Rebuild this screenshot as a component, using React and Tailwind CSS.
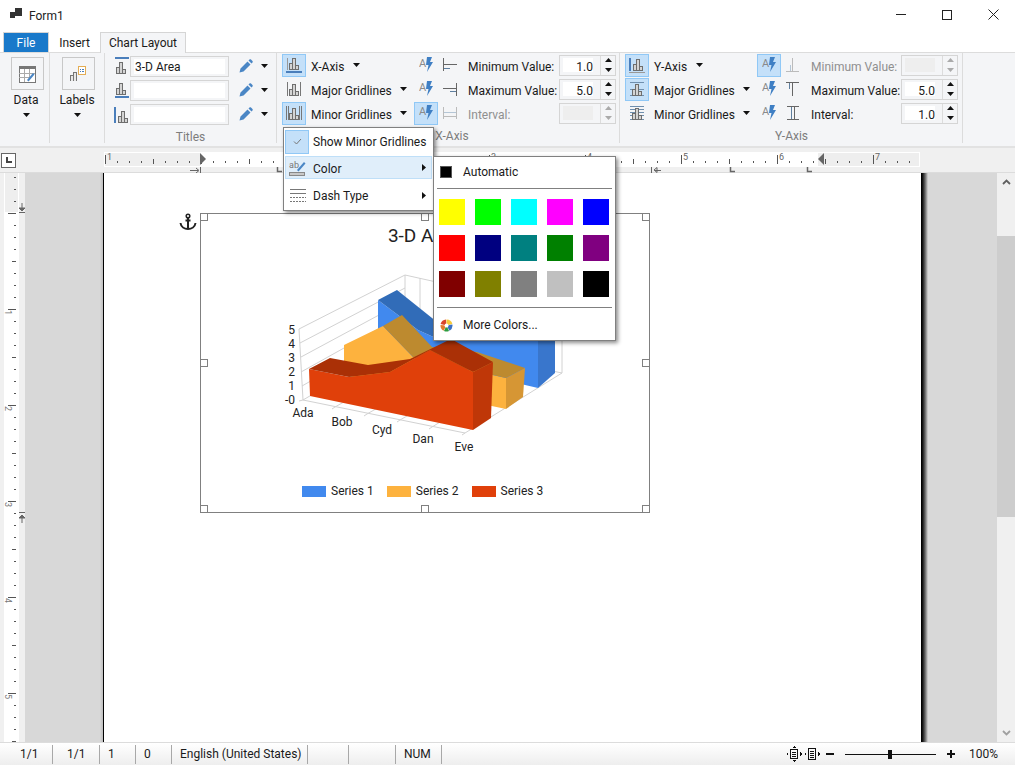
const Caret = ({ className = "" }) => (
  <svg width="7" height="4" viewBox="0 0 7 4" className={className}>
    <path d="M0 0h7L3.500 4z" fill="#111" />
  </svg>
);

const Bars = ({ x = 0, y = 0 }) => (
  <g transform={`translate(${x} ${y})`} fill="#d4d4d4" stroke="#6e6e6e">
    <rect x="4.500" y="8.500" width="3" height="6" />
    <rect x="7.500" y="3.500" width="3" height="11" />
    <rect x="10.500" y="10.500" width="3" height="4" />
  </g>
);

// small chart glyphs used on the ribbon, all on an 18x18 box
const ChartIcon = ({ kind }) => (
  <svg width="18" height="18" viewBox="0 0 18 18" shapeRendering="crispEdges">
    {kind === "top" && (<><path d="M3 1h14" stroke="#4a7ebb" strokeWidth="2" /><Bars y={2} /></>)}
    {kind === "base" && (<><Bars y={-1} /><path d="M3 16h14" stroke="#4a7ebb" strokeWidth="2" /></>)}
    {kind === "side" && (<><path d="M3 2v16" stroke="#4a7ebb" strokeWidth="2" /><Bars x={2} y={3} /></>)}
    {kind === "xaxis" && (<><path d="M2.500 2v12" stroke="#999" /><Bars y={-1} /><path d="M1 16h16" stroke="#4a7ebb" strokeWidth="2" /></>)}
    {kind === "major" && (<><path d="M2.500 2v14M15.500 2v14" stroke="#777" /><Bars x={0} y={1} /></>)}
    {kind === "minor" && (<><path d="M1.500 2v14M3.500 2v14M14.500 2v14M16.500 2v14" stroke="#777" /><Bars x={0} y={1} /></>)}
    {kind === "yaxis" && (<><path d="M2 2v13" stroke="#4a7ebb" strokeWidth="2" /><Bars x={1} y={0} /><path d="M1 16.500h16" stroke="#999" strokeWidth="1.500" /></>)}
    {kind === "ymajor" && (<><path d="M2 2.500h14M2 9.500h14M2 15.500h14" stroke="#6f8fae" /><Bars y={1} /></>)}
    {kind === "yminor" && (<><path d="M2 2.500h14M2 5.500h14M2 8.500h14M2 11.500h14M2 15.500h14" stroke="#6f8fae" /><Bars y={1} /></>)}
  </svg>
);

const Pencil = () => (
  <svg width="14" height="14" viewBox="0 0 14 14">
    <path d="M0.500 13.500l1-4 7-7 3 3-7 7zM9.500 1.500l1-1c.5-.4 1-.4 1.500 0l1.500 1.500c.4.500.4 1 0 1.500l-1 1z" fill="#4a86c5" />
  </svg>
);

const Bolt = () => (
  <svg width="14" height="18" viewBox="0 0 14 18">
    <text x="0" y="11" fontSize="11" fill="#8a8a8a">A</text>
    <path d="M8 1h5l-2 5h3l-6 10 1.500-7H7z" fill="#3f7fc4" />
  </svg>
);

const ScaleIcon = ({ kind, muted }) => {
  const c = muted ? "#b5c6d6" : "#5f7f9f";
  const d = muted ? "#bbb" : "#666";
  return (
    <svg width="18" height="18" viewBox="0 0 18 18" shapeRendering="crispEdges">
      {kind === "xmin" && (<><path d="M2.500 2v13M2.500 8.500h13" stroke={d} fill="none" /><path d="M3 12.500h6" stroke={c} /></>)}
      {kind === "xmax" && (<><path d="M15.500 3v13M2 8.500h13" stroke={d} fill="none" /><path d="M9 11.500h6" stroke={c} /></>)}
      {kind === "xint" && (<><path d="M2.500 3v12M15.500 3v12M2.500 12.500h13" stroke={d} fill="none" /><path d="M3 8.500h12" stroke={c} /></>)}
      {kind === "ymin" && (<><path d="M2 15.500h13M8.500 2v13" stroke={d} fill="none" /><path d="M6.500 9v6" stroke={c} /></>)}
      {kind === "ymax" && (<><path d="M2 2.500h13M8.500 3v13" stroke={d} fill="none" /><path d="M5.500 3v6" stroke={c} /></>)}
      {kind === "yint" && (<><path d="M3 2.500h12M3 15.500h12M10.500 3v12" stroke={d} fill="none" /><path d="M7.500 3v12" stroke={c} /></>)}
    </svg>
  );
};

const ToolBtn = ({ active, children, className = "w-[24px]" }) => (
  <div className={`${className} h-[23px] flex items-center justify-center border ${active ? "bg-[#c4e0f9] border-[#90c8f6]" : "border-transparent"}`}>
    {children}
  </div>
);

const TitleRow = ({ icon, value }) => (
  <div className="flex items-center h-[24px]">
    <div className="w-[18px] ml-[7px] flex justify-center"><ChartIcon kind={icon} /></div>
    <div className="w-[99px] h-[21px] border border-[#d5d5d5] flex items-center px-[3px]">
      <div className="w-full h-[15px] bg-white flex items-center pl-[1px] pt-[2px] leading-none">{value}</div>
    </div>
    <div className="ml-[10px]"><Pencil /></div>
    <Caret className="ml-[8px]" />
  </div>
);

const Spinner = ({ value, disabled, className = "ml-auto" }) => (
  <div className={`${className} w-[57px] h-[21px] border border-[#d5d5d5] flex items-center`}>
    <div className={`w-[30px] h-[14px] ml-[3px] pt-[3px] text-right leading-none flex items-center justify-end ${disabled ? "bg-[#eeeeee]" : "bg-white"}`}>{value}</div>
    <div className="ml-[7px] h-full w-[15px] border-l border-[#dcdcdc] flex flex-col items-center justify-center gap-[6px]">
      <svg width="7" height="4" viewBox="0 0 7 4"><path d="M0 4h7L3.500 0z" fill={disabled ? "#aaa" : "#111"} /></svg>
      <svg width="7" height="4" viewBox="0 0 7 4"><path d="M0 0h7L3.500 4z" fill={disabled ? "#aaa" : "#111"} /></svg>
    </div>
  </div>
);

const GroupLabel = ({ children }) => (
  <div className="text-center text-[#7d7d7d] leading-none">{children}</div>
);

const AxisRow = ({ icon, name, caretGap, active, boltActive, scale, muted, label, value, disabled, labelMuted }) => (
  <div className="flex items-center h-[24px]">
    <ToolBtn active={active}><ChartIcon kind={icon} /></ToolBtn>
    <div className="ml-[5px] w-[103px] flex items-center">
      <span className="pt-[4px]">{name}</span>
      <Caret className={caretGap} />
    </div>
    <ToolBtn active={boltActive}><Bolt /></ToolBtn>
    <div className="ml-[3px] w-[18px]"><ScaleIcon kind={scale} muted={muted} /></div>
    <span className={`ml-[9px] pt-[4px] ${labelMuted ? "text-[#8f8f8f]" : ""}`}>{label}</span>
    <Spinner value={value} disabled={disabled} />
  </div>
);

const AreaChart = () => (
  <svg width="448" height="260" viewBox="201 214 448 260" className="block">
    <text x="424" y="242" textAnchor="middle" fontSize="19" fill="#222">3-D Area</text>
    {/* walls and floor */}
    <g stroke="#d2d2d2" fill="none">
      <path d="M299 329L405 275L562 310V373L465 433L303 400L299 329M405 275V340L562 373M405 340L303 400" />
      <path d="M300 343L405 288M301 357L405 301M301 372L405 314M302 386L405 327" />
      <path d="M420 278V344M436 281V347M452 285V350M551 307V372M540 304V371" />
      <path d="M335 407L432 352M367 414L465 358M400 420L497 364M432 427L530 367" />
      <path d="M303 400l-4 1M335 407l-3 2M367 414l-3 2M400 420l-3 2M432 427l-3 2M465 433l-3 2" />
    </g>
    {/* blue series */}
    <path d="M378 300L418 330L440 340L538 340V388L378 350z" fill="#4189ee" />
    <path d="M378 300L397 290L437 322L560 322L538 340L440 340L418 330z" fill="#316cb8" />
    <path d="M538 340L555 330V373L538 388z" fill="#3976cc" />
    {/* orange series */}
    <path d="M344 345L383 326L413 357L506 378V409L344 375z" fill="#fdb23e" />
    <path d="M383 326L402 315L432 347L477 352L525 368L506 378L413 357z" fill="#bd8a2f" />
    <path d="M506 378L525 368L523 397L506 409z" fill="#d69634" />
    {/* red series */}
    <path d="M309 369L349 377L390 372L430 350L473 372V430L310 396z" fill="#e0400a" />
    <path d="M309 369L330 358L368 365L410 359L451 339L493 362L473 372L430 350L390 372L349 377z" fill="#aa3006" />
    <path d="M473 372L493 362L491 418L473 430z" fill="#bf3708" />
    <g fontSize="12" fill="#222" textAnchor="end">
      <text x="295" y="334">5</text>
      <text x="295" y="348">4</text>
      <text x="295" y="362">3</text>
      <text x="295" y="376">2</text>
      <text x="295" y="390">1</text>
      <text x="295" y="404">-0</text>
    </g>
    <g fontSize="12" fill="#222" textAnchor="middle">
      <text x="303" y="417">Ada</text>
      <text x="342" y="426">Bob</text>
      <text x="382" y="434">Cyd</text>
      <text x="423" y="443">Dan</text>
      <text x="464" y="451">Eve</text>
    </g>
  </svg>
);

const LegendItem = ({ swatch, name }) => (
  <div className="flex items-center gap-[5px]">
    <div className={`w-[24px] h-[11px] ${swatch}`} />
    <span className="text-[#222]">{name}</span>
  </div>
);

const Handle = ({ className }) => (
  <div className={`absolute w-[8px] h-[8px] bg-white border border-[#808080] ${className}`} />
);

const SWATCHES = [
  "bg-[#ffff00]", "bg-[#00ff00]", "bg-[#00ffff]", "bg-[#ff00ff]", "bg-[#0000ff]",
  "bg-[#ff0000]", "bg-[#000080]", "bg-[#008080]", "bg-[#008000]", "bg-[#800080]",
  "bg-[#800000]", "bg-[#808000]", "bg-[#808080]", "bg-[#c0c0c0]", "bg-[#000000]",
];

const hTicks = [];
for (let x = 105; x < 920; x += 12) hTicks.push(x);
const vTicks = [];
for (let y = 4; y < 569; y += 12) vTicks.push(y);

const HRuler = () => (
  <svg width="999" height="25" viewBox="16 0 999 25" className="block">
    <rect x="104" y="4" width="816" height="15" fill="#fff" />
    <rect x="105" y="5" width="95" height="13" fill="#eeeeee" />
    <rect x="818" y="5" width="101" height="13" fill="#eeeeee" />
    <g stroke="#555" shapeRendering="crispEdges">
      {hTicks.map((x) => {
        const k = (x - 105) / 12;
        const y1 = k % 8 === 0 ? 7 : k % 4 === 0 ? 11 : 13;
        const y2 = k % 8 === 0 ? 16 : k % 4 === 0 ? 16 : 15;
        return <line key={x} x1={x + 0.5} x2={x + 0.5} y1={y1} y2={y2} />;
      })}
    </g>
    <g fontSize="9" fill="#666">
      <text x="107" y="12">1</text>
      <text x="299" y="12">1</text>
      <text x="395" y="12">2</text>
      <text x="491" y="12">3</text>
      <text x="587" y="12">4</text>
      <text x="683" y="12">5</text>
      <text x="779" y="12">6</text>
      <text x="875" y="12">7</text>
    </g>
    <path d="M200 5l6 6-6 6z" fill="#666" />
    <path d="M824 5l-6 6 6 6z" fill="#666" />
    <path d="M190 22.500h8M196 20l3 2.500-3 2.500M200.500 19v6" stroke="#666" fill="none" />
    <path d="M651.500 19v6M654 22l3-2.500v5zM655 22.500h6" stroke="#666" fill="none" />
    <path d="M277.500 19v4.500H282M730.500 19v4.500H735M807.500 19v4.500H812" stroke="#666" strokeWidth="1.500" fill="none" />
  </svg>
);

const VRuler = () => (
  <svg width="25" height="569" viewBox="0 0 25 569" className="block shrink-0">
    <rect x="4" y="0" width="15" height="569" fill="#fff" />
    <rect x="5" y="0" width="13" height="39" fill="#eeeeee" />
    <g stroke="#555" shapeRendering="crispEdges">
      {vTicks.map((y) => {
        const k = (y - 40) / 12;
        const big = k % 8 === 0;
        const mid = k % 4 === 0;
        return <line key={y} x1={big ? 8 : mid ? 12 : 14} x2="16" y1={y + 0.5} y2={y + 0.5} />;
      })}
    </g>
    <g fontSize="9" fill="#777">
      <text transform="translate(5 137) rotate(90)">1</text>
      <text transform="translate(5 233) rotate(90)">2</text>
      <text transform="translate(5 329) rotate(90)">3</text>
      <text transform="translate(5 425) rotate(90)">4</text>
      <text transform="translate(5 521) rotate(90)">5</text>
    </g>
    <path d="M22 30v8M19 35h6l-3 3zM19 39.500h6" stroke="#666" fill="#666" />
    <path d="M22 350v-8M19 345h6l-3-3zM19 339.500h6" stroke="#666" fill="#666" />
  </svg>
);

const StatusCell = ({ className, children }) => (
  <div className={`h-[19px] flex items-center border-r border-[#a8a8a8] ${className}`}>{children}</div>
);

export default function App() {
  return (
    <div className="relative w-[1015px] h-[765px] overflow-hidden bg-white flex flex-col font-[Roboto,sans-serif] text-[12px] text-[#1a1a1a]">
      {/* title bar */}
      <div className="h-[32px] flex items-center shrink-0">
        <svg width="13" height="12" viewBox="0 0 13 12" className="ml-[10px] mt-[-4px]" shapeRendering="crispEdges">
          <path d="M0 4h5v6H0zM5 0h7v8H5z" fill="#333" />
        </svg>
        <span className="ml-[6px] mt-[-1px] text-[#222]">Form1</span>
        <div className="ml-auto flex items-center mt-[-3px]">
          <div className="w-[46px] flex justify-center"><div className="w-[10px] h-px bg-[#222]" /></div>
          <div className="w-[46px] flex justify-center"><div className="w-[10px] h-[10px] border border-[#222]" /></div>
          <div className="w-[46px] mr-[-1px] flex justify-center">
            <svg width="11" height="11" viewBox="0 0 11 11"><path d="M0.500 0.500l10 10M10.500 0.500l-10 10" stroke="#222" /></svg>
          </div>
        </div>
      </div>
      {/* tabs */}
      <div className="h-[21px] shrink-0 flex items-end border-b border-[#dcdcdc] pl-[3px]">
        <div className="w-[46px] h-[20px] bg-[#1979ca] text-white flex items-center justify-center border border-[#d5d5d5] border-b-0">File</div>
        <div className="w-[51px] h-[20px] flex items-center justify-center pt-[1px]">Insert</div>
        <div className="w-[86px] h-[21px] mb-[-1px] bg-[#f4f5f7] border border-[#d5d5d5] border-b-0 flex items-center justify-center">Chart Layout</div>
      </div>
      {/* ribbon */}
      <div className="h-[95px] shrink-0 bg-[#f4f5f7] border-b-2 border-[#e2e2e2] flex">
        <div className="w-[50px] h-[90px] border-r border-[#dcdcdc] flex flex-col items-center pt-[4px]">
          <div className="w-[33px] h-[33px] border border-[#c8c8c8] flex items-center justify-center ml-[5px]">
            <svg width="18" height="18" viewBox="0 0 18 18" shapeRendering="crispEdges">
              <rect x="1" y="1" width="16" height="16" fill="#fff" stroke="#777" />
              <rect x="1" y="1" width="16" height="3" fill="#777" />
              <path d="M1 8.500h16M1 12.500h10M6.500 4v13M11.500 4v9" stroke="#aaa" />
              <path d="M9 15l6-7 1.500 1.500-6 7z" fill="#4a86c5" shapeRendering="auto" />
            </svg>
          </div>
          <span className="mt-[2px] ml-[3px] leading-[16px]">Data</span>
          <Caret className="mt-[5px] ml-[3px]" />
        </div>
        <div className="w-[55px] h-[90px] border-r border-[#dcdcdc] flex flex-col items-center pt-[4px]">
          <div className="w-[33px] h-[33px] border border-[#c8c8c8] flex items-center justify-center ml-[2px]">
            <svg width="18" height="18" viewBox="0 0 18 18" shapeRendering="crispEdges">
              <path d="M1.500 16V10h3v6M4.500 16V7h3v9" fill="#e8e8e8" stroke="#777" />
              <rect x="9.500" y="1.500" width="7" height="8" fill="#fff" stroke="#e4ad55" />
              <path d="M11 4h1M11 6h1M13 4h2M13 6h2" stroke="#4a7ebb" />
            </svg>
          </div>
          <span className="mt-[2px] leading-[16px]">Labels</span>
          <Caret className="mt-[5px]" />
        </div>
        <div className="w-[172px] h-[90px] border-r border-[#dcdcdc] flex flex-col pt-[1px]">
          <TitleRow icon="top" value="3-D Area" />
          <TitleRow icon="base" value="" />
          <TitleRow icon="side" value="" />
          <div className="mt-[5px]"><GroupLabel>Titles</GroupLabel></div>
        </div>
        <div className="w-[343px] h-[90px] border-r border-[#dcdcdc] flex flex-col pl-[5px] pr-[3px]">
          <AxisRow icon="xaxis" name="X-Axis" caretGap="ml-[9px]" active scale="xmin" label="Minimum Value:" value="1.0" />
          <AxisRow icon="major" name="Major Gridlines" caretGap="ml-[8px]" scale="xmax" label="Maximum Value:" value="5.0" />
          <AxisRow icon="minor" name="Minor Gridlines" caretGap="ml-[8px]" active boltActive scale="xint" muted label="Interval:" disabled labelMuted />
          <div className="mt-[5px] pl-[6px]"><GroupLabel>X-Axis</GroupLabel></div>
        </div>
        <div className="w-[343px] h-[90px] border-r border-[#dcdcdc] flex flex-col pl-[5px] pr-[4px]">
          <AxisRow icon="yaxis" name="Y-Axis" caretGap="ml-[9px]" active boltActive scale="ymin" muted label="Minimum Value:" disabled labelMuted />
          <AxisRow icon="ymajor" name="Major Gridlines" caretGap="ml-[8px]" active scale="ymax" label="Maximum Value:" value="5.0" />
          <AxisRow icon="yminor" name="Minor Gridlines" caretGap="ml-[8px]" scale="yint" label="Interval:" value="1.0" />
          <div className="mt-[5px]"><GroupLabel>Y-Axis</GroupLabel></div>
        </div>
      </div>
      {/* ruler */}
      <div className="h-[25px] shrink-0 bg-[#f0f0f0] flex items-center border-b border-[#dcdcdc]">
        <div className="w-[15px] h-[15px] ml-[1px] border border-[#666] bg-white flex items-center justify-center">
          <svg width="7" height="7" viewBox="0 0 7 7" shapeRendering="crispEdges"><path d="M1 0h2v4h4v2H1z" fill="#444" /></svg>
        </div>
        <HRuler />
      </div>
      {/* document area */}
      <div className="flex-1 min-h-0 flex bg-[#f0f0f0]">
        <VRuler />
        <div className="flex-1 bg-[#d8d8d8] flex">
          <div className="w-[75px] h-full" />
          <div className="w-[3px] h-full bg-gradient-to-r from-[#d8d8d8] to-[#bdbdbd]" />
          <div className="relative w-[818px] h-full bg-white border-l border-black">
            <svg width="18" height="18" viewBox="0 0 18 18" className="absolute left-[75px] top-[40px]">
              <circle cx="9" cy="3" r="1.800" fill="none" stroke="#222" strokeWidth="1.500" />
              <path d="M9 5v11M6.500 7.500h5M1.500 10c.5 4 4 6 7.500 6s7-2 7.500-6" fill="none" stroke="#222" strokeWidth="2" />
            </svg>
            <div className="relative ml-[96px] mt-[40px] w-[450px] h-[300px] border border-[#808080] flex flex-col">
              <AreaChart />
              <div className="flex gap-[13px] mt-[8px] pl-[101px]">
                <LegendItem swatch="bg-[#4189ee]" name="Series 1" />
                <LegendItem swatch="bg-[#fdb23e]" name="Series 2" />
                <LegendItem swatch="bg-[#e0400a]" name="Series 3" />
              </div>
              <Handle className="left-[-1px] top-[-1px]" />
              <Handle className="left-[220px] top-[-1px]" />
              <Handle className="right-[-1px] top-[-1px]" />
              <Handle className="left-[-1px] top-[145px]" />
              <Handle className="right-[-1px] top-[145px]" />
              <Handle className="left-[-1px] bottom-[-1px]" />
              <Handle className="left-[220px] bottom-[-1px]" />
              <Handle className="right-[-1px] bottom-[-1px]" />
            </div>
          </div>
          <div className="w-[7px] h-full bg-gradient-to-r from-black to-[#d8d8d8]" />
          <div className="flex-1" />
        </div>
        <div className="w-[18px] h-full bg-[#f0f0f0] flex flex-col items-center">
          <svg width="9" height="6" viewBox="0 0 9 6" className="mt-[6px]"><path d="M1 5l3.500-3.500L8 5" fill="none" stroke="#606060" strokeWidth="1.800" /></svg>
          <div className="w-full h-[281px] mt-[51px] bg-[#cdcdcd]" />
          <svg width="9" height="6" viewBox="0 0 9 6" className="mt-auto mb-[6px]"><path d="M1 1l3.500 3.500L8 1" fill="none" stroke="#a0a0a0" strokeWidth="1.800" /></svg>
        </div>
      </div>
      {/* status bar */}
      <div className="h-[23px] shrink-0 border-t border-[#dcdcdc] bg-gradient-to-b from-white to-[#eeeeee] flex items-center">
        <StatusCell className="w-[53px] pl-[20px]">1/1</StatusCell>
        <StatusCell className="w-[47px] pl-[14px]">1/1</StatusCell>
        <StatusCell className="w-[36px] pl-[8px]">1</StatusCell>
        <StatusCell className="w-[36px] pl-[8px]">0</StatusCell>
        <StatusCell className="w-[136px] pl-[8px]">English (United States)</StatusCell>
        <StatusCell className="w-[41px]" />
        <StatusCell className="w-[47px]" />
        <StatusCell className="w-[46px] pl-[8px]">NUM</StatusCell>
        <svg width="16" height="16" viewBox="0 0 16 16" className="ml-[344px]" shapeRendering="crispEdges">
          <rect x="4.500" y="3.500" width="7" height="9" fill="none" stroke="#111" />
          <path d="M6 6h4M6 8h4M6 10h4" stroke="#111" />
          <path d="M8 0l2 2H6zM8 16l-2-2h4zM0 8l2-2v4zM16 8l-2 2V6z" fill="#111" />
        </svg>
        <svg width="16" height="12" viewBox="0 0 16 12" className="ml-[2px]" shapeRendering="crispEdges">
          <rect x="4.500" y="0.500" width="7" height="11" fill="none" stroke="#111" />
          <path d="M6 3h4M6 5h4M6 7h4M6 9h4" stroke="#111" />
          <path d="M0 6l2-2v4zM16 6l-2 2V4z" fill="#111" />
        </svg>
        <div className="ml-[6px] w-[8px] h-[2px] bg-[#111]" />
        <div className="relative ml-[11px] w-[91px] h-px bg-[#111]">
          <div className="absolute left-[43px] top-[-4px] w-[4px] h-[9px] bg-[#111]" />
        </div>
        <svg width="8" height="8" viewBox="0 0 8 8" className="ml-[11px]" shapeRendering="crispEdges"><path d="M3 0h2v3h3v2H5v3H3V5H0V3h3z" fill="#111" /></svg>
        <span className="ml-[14px]">100%</span>
      </div>

      {/* gridlines dropdown */}
      <div className="absolute left-[283px] top-[127px] w-[151px] h-[84px] bg-white border border-[#808080] shadow-[2px_2px_4px_rgba(0,0,0,0.45)] pt-[1px] pl-[1px] pr-[1px]">
        <div className="flex items-center h-[25px]">
          <div className="w-[24px] h-[24px] bg-[#c4e0f9] border border-[#90c8f6] flex items-center justify-center">
            <svg width="9" height="7" viewBox="0 0 9 7"><path d="M1 3.500l2.500 2.500L8 1" fill="none" stroke="#777" /></svg>
          </div>
          <span className="ml-[4px]">Show Minor Gridlines</span>
        </div>
        <div className="flex items-center h-[23px] mt-[2px] bg-[#e0eefa] border border-[#bfdff8]">
          <svg width="18" height="18" viewBox="0 0 18 18" className="ml-[3px] shrink-0">
            <text x="0" y="9" fontSize="9" fill="#777">ab</text>
            <path d="M8 11l7-8 1.500 1.500-7 8z" fill="#4a86c5" />
            <rect x="0.500" y="13.500" width="15" height="3" fill="#c8c8c8" stroke="#888" />
          </svg>
          <span className="ml-[6px] pt-[2px]">Color</span>
          <svg width="4" height="7" viewBox="0 0 4 7" className="ml-auto mr-[5px]"><path d="M0 0l4 3.500L0 7z" fill="#111" /></svg>
        </div>
        <div className="flex items-center h-[25px] mt-[4px]">
          <svg width="18" height="16" viewBox="0 0 18 16" className="ml-[4px] shrink-0" shapeRendering="crispEdges">
            <path d="M1 1.500h16M1 5.500h16" stroke="#777" />
            <path d="M1 9.500h16M1 13.500h16" stroke="#777" strokeDasharray="2 1" />
          </svg>
          <span className="ml-[6px]">Dash Type</span>
          <svg width="4" height="7" viewBox="0 0 4 7" className="ml-auto mr-[6px]"><path d="M0 0l4 3.500L0 7z" fill="#111" /></svg>
        </div>
      </div>

      {/* color submenu */}
      <div className="absolute left-[433px] top-[156px] w-[183px] h-[185px] bg-white border border-[#808080] shadow-[2px_2px_4px_rgba(0,0,0,0.45)] flex flex-col">
        <div className="h-[31px] flex items-center pl-[6px] pb-[2px]">
          <div className="w-[12px] h-[12px] bg-black border border-[#555]" />
          <span className="ml-[11px]">Automatic</span>
        </div>
        <div className="h-px mx-[3px] bg-[#808080]" />
        <div className="grid grid-cols-[repeat(5,26px)] gap-[10px] pl-[5px] mt-[10px]">
          {SWATCHES.map((c) => <div key={c} className={`w-[26px] h-[26px] ${c}`} />)}
        </div>
        <div className="h-px mx-[3px] mt-[10px] bg-[#808080]" />
        <div className="flex-1 flex items-center pl-[6px] pt-[2px]">
          <svg width="13" height="13" viewBox="0 0 13 13">
            <path d="M6.500 6.500L6 0.500A6 6 0 0 0 0.600 5z" fill="#d9452b" />
            <path d="M6.500 6.500L6.500 0.500A6 6 0 0 1 12.400 5z" fill="#f7c93a" />
            <path d="M6.500 6.500L12.400 5.500A6 6 0 0 1 9.500 11.700z" fill="#3a6fc4" />
            <path d="M6.500 6.500L9 12A6 6 0 0 1 4 12z" fill="#2d9c3f" />
            <path d="M6.500 6.500L3.500 11.700A6 6 0 0 1 0.500 6z" fill="#e27b2c" />
            <circle cx="6.500" cy="6.500" r="2" fill="#fff" />
          </svg>
          <span className="ml-[10px]">More Colors...</span>
        </div>
      </div>
    </div>
  );
}
